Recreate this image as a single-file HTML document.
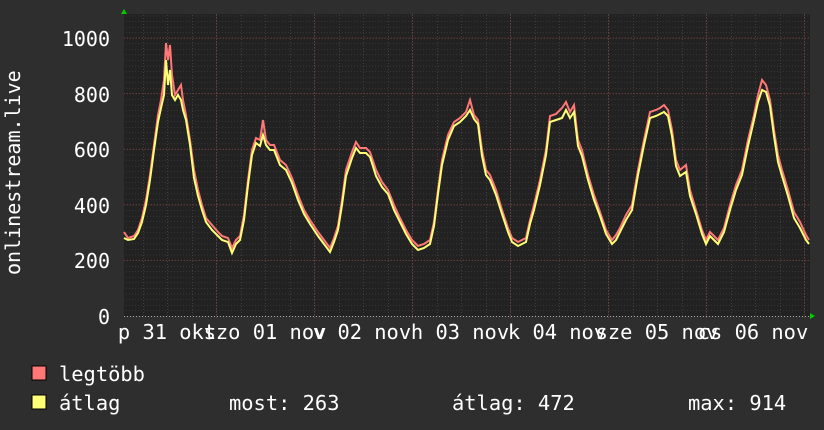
<html><head><style>body{margin:0;background:#2e2e2e}svg{display:block}text{font-family:"DejaVu Sans Mono","Liberation Mono",monospace;fill:#fff}</style></head><body>
<svg width="824" height="430" xmlns="http://www.w3.org/2000/svg">
<defs>
<pattern id="hm" width="824" height="5.56" patternUnits="userSpaceOnUse" y="316"><line x1="0" y1="0" x2="824" y2="0" stroke="#4a4a4a" stroke-dasharray="1,2"/></pattern>
<pattern id="vm" width="24.5" height="430" patternUnits="userSpaceOnUse" x="118.5"><line x1="0" y1="0" x2="0" y2="430" stroke="#5a5a5a" stroke-dasharray="1,2"/></pattern>
</defs>
<rect width="824" height="430" fill="#2e2e2e"/>
<rect x="124" y="14" width="686" height="302" fill="#222"/>
<rect x="124" y="14" width="686" height="302" fill="url(#hm)"/>
<rect x="124" y="14" width="686" height="302" fill="url(#vm)"/>
<g stroke="#7a3a3a" stroke-dasharray="1,2">
<line x1="124" x2="810" y1="260.4" y2="260.4"/><line x1="124" x2="810" y1="204.8" y2="204.8"/><line x1="124" x2="810" y1="149.2" y2="149.2"/><line x1="124" x2="810" y1="93.6" y2="93.6"/><line x1="124" x2="810" y1="38" y2="38"/>
<line x1="216.5" x2="216.5" y1="14" y2="320"/><line x1="314.5" x2="314.5" y1="14" y2="320"/><line x1="412.5" x2="412.5" y1="14" y2="320"/><line x1="510.5" x2="510.5" y1="14" y2="320"/><line x1="608.5" x2="608.5" y1="14" y2="320"/><line x1="706.5" x2="706.5" y1="14" y2="320"/><line x1="804.5" x2="804.5" y1="14" y2="320"/>
</g>
<line x1="124" y1="316.5" x2="812" y2="316.5" stroke="#aaa" stroke-dasharray="1,2"/>
<polygon points="121,14 127,14 124,9" fill="#0c0"/><polygon points="810,313 810,319 815,316" fill="#0c0"/>
<polyline fill="none" stroke="#f77" stroke-width="2" points="124,232 128,238 134,236 138,230 142,218 146,200 150,175 154,145 158,115 161,100 164,80 166,43 168,60 170,45 172,75 175,95 178,90 181,85 183,100 186,115 190,140 194,170 198,190 202,205 206,218 212,225 218,232 222,236 228,238 232,248 236,240 240,236 244,215 248,180 252,150 256,138 260,140 263,120 266,140 270,145 274,145 280,160 286,165 292,178 298,195 304,210 310,220 318,232 324,240 330,248 334,238 338,226 342,200 346,170 352,152 356,142 360,148 366,148 370,152 376,170 382,182 388,190 394,205 400,218 406,230 412,240 418,246 424,244 430,240 434,222 438,190 442,160 448,135 454,122 460,118 466,112 470,100 474,115 478,120 482,150 486,170 490,175 496,190 502,210 508,228 512,238 518,242 522,240 526,238 530,220 534,205 540,180 546,150 550,116 556,114 562,108 566,102 570,112 574,105 578,140 582,150 588,175 594,195 600,212 606,230 612,240 616,235 620,228 626,215 632,205 638,170 644,140 650,112 656,110 660,108 664,105 668,110 672,130 676,160 680,170 686,165 690,190 696,210 702,230 706,240 710,232 714,236 718,240 724,228 730,205 736,185 742,170 748,140 754,115 758,95 762,80 766,85 770,100 774,130 778,155 782,170 788,190 794,212 800,222 806,235 809,240"/>
<polyline fill="none" stroke="#ff7" stroke-width="2" points="124,238 128,240 134,239 138,233 142,222 146,205 150,180 154,150 158,122 161,108 164,95 166,60 168,85 170,70 172,95 175,100 178,95 181,100 183,110 186,120 190,145 194,178 198,196 202,210 206,222 212,230 218,236 222,240 228,242 232,253 236,244 240,240 244,220 248,185 252,155 256,143 260,146 263,135 266,145 270,150 274,150 280,165 286,170 292,183 298,200 304,214 310,224 318,236 324,244 330,252 334,242 338,230 342,205 346,176 352,158 356,148 360,153 366,153 370,157 376,176 382,187 388,194 394,210 400,222 406,234 412,244 418,250 424,248 430,244 434,226 438,194 442,165 448,140 454,126 460,122 466,116 470,110 474,119 478,124 482,156 486,175 490,180 496,195 502,214 508,232 512,242 518,246 522,244 526,242 530,224 534,210 540,185 546,155 550,122 556,120 562,118 566,110 570,118 574,112 578,146 582,156 588,180 594,200 600,216 606,234 612,244 616,240 620,232 626,220 632,210 638,175 644,145 650,118 656,116 660,114 664,112 668,116 672,136 676,166 680,176 686,172 690,196 696,214 702,234 706,244 710,236 714,240 718,244 724,232 730,210 736,190 742,175 748,146 754,120 758,102 762,90 766,92 770,106 774,136 778,162 782,176 788,196 794,218 800,228 806,240 809,244"/>
<g font-size="20" text-anchor="end">
<text x="110" y="46">1000</text><text x="110" y="102">800</text><text x="110" y="157">600</text><text x="110" y="213">400</text><text x="110" y="268">200</text><text x="110" y="324">0</text>
</g>
<text font-size="20" transform="translate(20,275) rotate(-90)">onlinestream.live</text>
<g font-size="20.4" text-anchor="middle">
<text x="167" y="339">p 31 okt</text><text x="265" y="339">szo 01 nov</text><text x="362" y="339">v 02 nov</text><text x="460" y="339">h 03 nov</text><text x="557" y="339">k 04 nov</text><text x="657" y="339">sze 05 nov</text><text x="753" y="339">cs 06 nov</text>
</g>
<rect x="32" y="366" width="14" height="14" fill="#f77" stroke="#000"/>
<rect x="32" y="395" width="14" height="14" fill="#ff7" stroke="#000"/>
<g font-size="20.4">
<text x="59" y="381">legtöbb</text><text x="59" y="410">átlag</text>
<text x="229" y="410">most: 263</text><text x="452" y="410">átlag: 472</text><text x="688" y="410">max: 914</text>
</g>
</svg>
</body></html>
